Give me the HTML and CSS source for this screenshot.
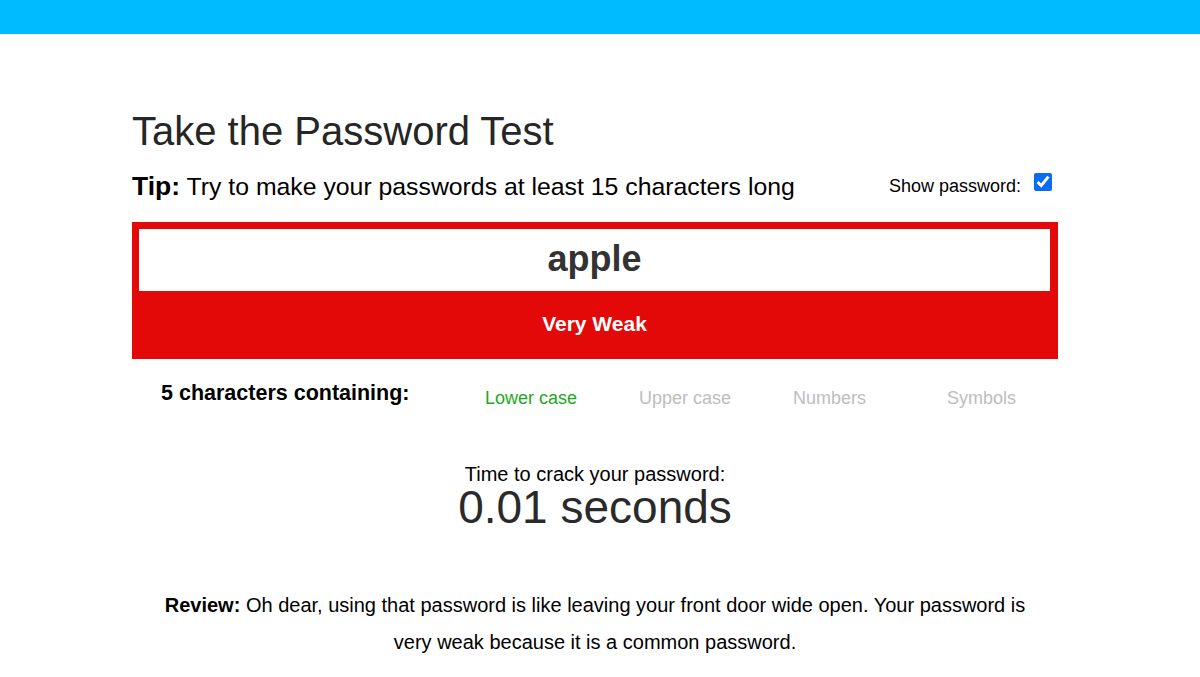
FILE: index.html
```
<!DOCTYPE html>
<html lang="en">
<head>
<meta charset="utf-8">
<title>Take the Password Test</title>
<link rel="stylesheet" href="styles.css">
</head>
<body>
<div class="topbar"></div>
<main class="main">
  <div class="page">
    <h1 class="title">Take the Password Test</h1>
    <div class="tip-row">
      <p class="tip"><strong class="tip-label">Tip:</strong> Try to make your passwords at least 15 characters long</p>
      <label class="show">Show password: <input class="show-check" type="checkbox" checked></label>
    </div>
    <div class="meter">
      <input class="pw-input" type="text" value="apple">
      <div class="strength">Very Weak</div>
    </div>
    <div class="chars">
      <div class="chars-label">5 characters containing:</div>
      <div class="chars-item on">Lower case</div>
      <div class="chars-item">Upper case</div>
      <div class="chars-item">Numbers</div>
      <div class="chars-item last">Symbols</div>
    </div>
    <div class="crack">
      <div class="crack-label">Time to crack your password:</div>
      <div class="crack-time">0.01 seconds</div>
    </div>
    <p class="review"><strong>Review:</strong> Oh dear, using that password is like leaving your front door wide open. Your password is very weak because it is a common password.</p>
  </div>
</main>
</body>
</html>
```
FILE: styles.css
```
html, body {
  margin: 0;
  padding: 0;
  background: #fff;
}
body {
  font-family: "Liberation Sans", Arial, sans-serif;
  color: #000;
}
.topbar {
  height: 34px;
  background: #00bbff;
}
.main {
  padding-right: 10px;
}
.page {
  width: 926px;
  margin: 0 auto;
}
.title {
  margin: 75px 0 0;
  font-size: 40px;
  line-height: 45px;
  font-weight: normal;
  color: #262626;
}
.tip-row {
  margin-top: 17px;
  height: 30px;
  display: flex;
  align-items: center;
  justify-content: space-between;
}
.tip {
  margin: 0;
  font-size: 24.8px;
  line-height: 30px;
}
.tip-label {
  font-size: 26.5px;
}
.show {
  display: flex;
  align-items: center;
  font-size: 18px;
  line-height: 22px;
}
.show-check {
  width: 18px;
  height: 18px;
  margin: 0 6px 8px 13px;
  accent-color: #0a6cf5;
}
.meter {
  margin-top: 21px;
  background: #e30909;
  padding: 7px 8px 0 7px;
}
.pw-input {
  display: block;
  box-sizing: border-box;
  width: 100%;
  height: 62px;
  border: none;
  outline: none;
  padding: 0 0 2px;
  margin: 0;
  background: #fff;
  text-align: center;
  font-family: "Liberation Sans", Arial, sans-serif;
  font-weight: bold;
  font-size: 36px;
  color: #333;
}
.strength {
  height: 66px;
  line-height: 66px;
  padding-bottom: 2px;
  text-align: center;
  color: #fff;
  font-weight: bold;
  font-size: 21px;
}
.chars {
  margin-top: 21px;
  display: flex;
}
.chars-label {
  flex: 0 0 324px;
  padding-left: 29px;
  font-weight: bold;
  font-size: 21.5px;
  line-height: 26px;
}
.chars-item {
  flex: 0 0 154px;
  padding-top: 5px;
  font-size: 18px;
  line-height: 26px;
  color: #bdbdbd;
}
.chars-item.last {
  flex: 0 0 auto;
}
.chars-item.on {
  color: #1ea81e;
}
.crack {
  margin-top: 53px;
  text-align: center;
}
.crack-label {
  font-size: 20px;
  line-height: 20px;
}
.crack-time {
  font-size: 46px;
  line-height: 46px;
  color: #2a2a2a;
}
.review {
  margin: 57px 0 0;
  padding: 0 30px;
  text-align: center;
  font-size: 20px;
  line-height: 37px;
}
```
